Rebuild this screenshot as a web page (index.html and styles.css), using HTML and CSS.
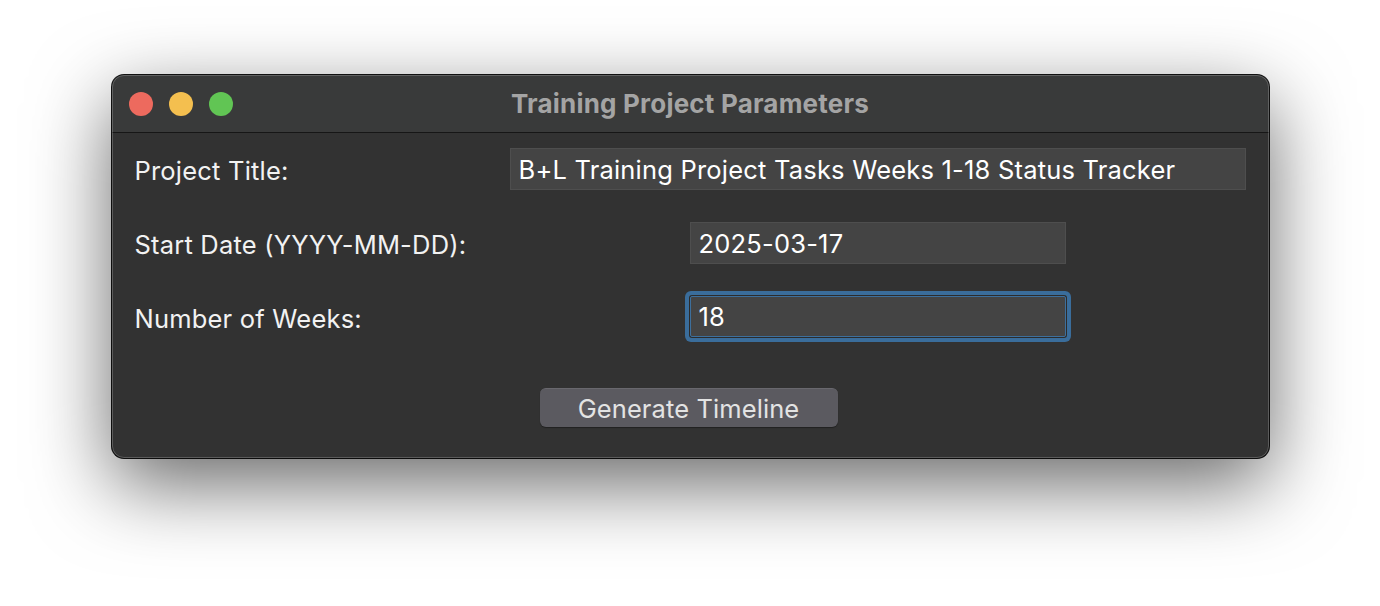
FILE: index.html
```html
<!DOCTYPE html>
<html>
<head>
<meta charset="utf-8">
<link rel="stylesheet" href="styles.css">
</head>
<body>
<div class="window">
  <div class="titlebar">
    <div class="lights">
      <span class="light red"></span>
      <span class="light yellow"></span>
      <span class="light green"></span>
    </div>
    <div class="title">Training Project Parameters</div>
  </div>
  <div class="content">
    <div class="form">
      <div class="label">Project Title:</div>
      <div class="field"><div class="entry wide">B+L Training Project Tasks Weeks 1-18 Status Tracker</div></div>
      <div class="label">Start Date (YYYY-MM-DD):</div>
      <div class="field"><div class="entry">2025-03-17</div></div>
      <div class="label">Number of Weeks:</div>
      <div class="field"><div class="entry focus">18</div></div>
    </div>
    <div class="actions">
      <button class="btn">Generate Timeline</button>
    </div>
  </div>
</div>
</body>
</html>
```
FILE: styles.css
```css
html, body {
  margin: 0;
  padding: 0;
  background: #ffffff;
}
body {
  width: 1380px;
  height: 606px;
  overflow: hidden;
  display: flex;
  justify-content: center;
  align-items: flex-start;
  padding-top: 75px;
  box-sizing: border-box;
  font-family: "Inter", "Noto Sans", sans-serif;
}
.window {
  position: relative;
  width: 1157px;
  height: 383px;
  border-radius: 12px;
  background: #323232;
  overflow: hidden;
  box-shadow: 0 26px 80px rgba(0, 0, 0, 0.6), 0 0 0 1px #141414;
  display: flex;
  flex-direction: column;
}
.window::after {
  content: "";
  position: absolute;
  inset: 0;
  border-radius: 12px;
  border: 1px solid rgba(255, 255, 255, 0.2);
  pointer-events: none;
}
.titlebar {
  position: relative;
  height: 57px;
  background: #393a3a;
  border-bottom: 1px solid #161616;
  display: flex;
  align-items: center;
  justify-content: center;
  flex-shrink: 0;
}
.lights {
  position: absolute;
  left: 17px;
  top: 17px;
  display: flex;
  gap: 16px;
}
.light {
  width: 24px;
  height: 24px;
  border-radius: 50%;
  display: block;
}
.red { background: #ed6a5e; }
.yellow { background: #f4bf4f; }
.green { background: #61c554; }
.title {
  color: #a4a4a4;
  font-size: 26px;
  font-weight: 700;
  letter-spacing: 0.2px;
  margin-top: -1px;
}
.content {
  padding: 15px 22px 0 22px;
  display: flex;
  flex-direction: column;
}
.form {
  display: grid;
  grid-template-columns: 376px 736px;
  grid-auto-rows: 42px;
  row-gap: 32px;
}
.label {
  color: #f2f2f2;
  font-size: 25.5px;
  letter-spacing: 0.2px;
  display: flex;
  align-items: center;
  padding-top: 3px;
  padding-left: 1px;
}
.field {
  display: flex;
  justify-content: center;
  align-items: stretch;
}
.entry {
  width: 376px;
  box-sizing: border-box;
  background: #444444;
  border: 1px solid #4e4e4e;
  color: #ffffff;
  font-size: 25.5px;
  letter-spacing: 0.2px;
  padding: 0 8px;
  display: flex;
  align-items: center;
}
.entry.wide {
  width: 736px;
}
.entry.focus {
  height: 41px;
  border-color: #3d6f9c;
  box-shadow: 0 0 0 1px #2c2c2c, 0 0 0 5px #3a6d9b;
  border-radius: 2px;
}
.actions {
  display: flex;
  justify-content: center;
  padding-top: 50px;
}
.btn {
  width: 298px;
  height: 39px;
  background: #5b5a60;
  border: none;
  border-top: 1px solid #69686e;
  border-radius: 6px;
  box-shadow: 0 1px 1px rgba(0, 0, 0, 0.35);
  color: #e3e3e3;
  font-family: "Inter", "Noto Sans", sans-serif;
  font-size: 25.5px;
  letter-spacing: 0.1px;
  padding: 0;
  margin-right: 3px;
}
```
